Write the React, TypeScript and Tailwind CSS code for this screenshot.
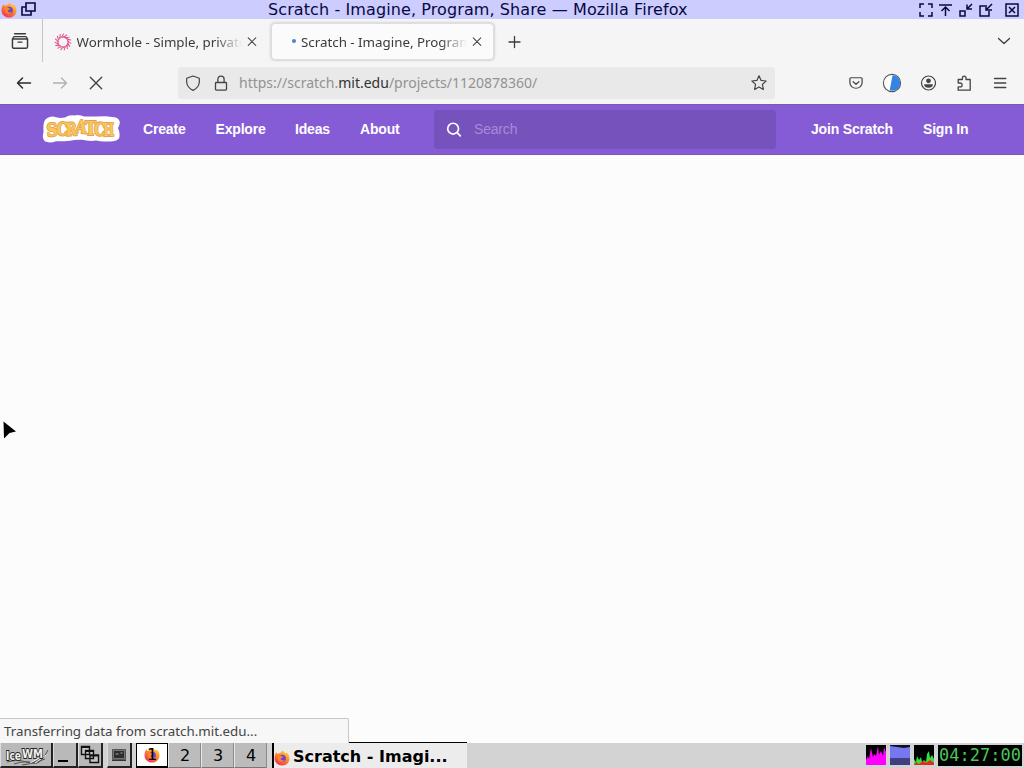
import type { ReactNode } from "react";

interface IconProps {
  /** Square size in pixels. */
  size?: number;
  className?: string;
  strokeWidth?: number;
  children: ReactNode;
}

/** Shared 16-unit canvas for the browser's line icons. */
function Icon({ size = 16, className = "", strokeWidth = 1.2, children }: IconProps) {
  return (
    <svg
      width={size}
      height={size}
      viewBox="0 0 16 16"
      fill="none"
      stroke="currentColor"
      strokeWidth={strokeWidth}
      strokeLinecap="round"
      strokeLinejoin="round"
      className={`shrink-0 ${className}`}
    >
      {children}
    </svg>
  );
}

function FirefoxLogo({ size = 16, className = "" }: { size?: number; className?: string }) {
  return (
    <svg width={size} height={size} viewBox="0 0 16 16" className={`shrink-0 ${className}`}>
      <defs>
        <linearGradient id="fox" x1="0.85" y1="0" x2="0.2" y2="1">
          <stop offset="0" stopColor="#ffdc3e" />
          <stop offset="0.45" stopColor="#ff8a2a" />
          <stop offset="1" stopColor="#ee2b58" />
        </linearGradient>
      </defs>
      <path
        d="M2.2 2.2 3.6 4 C4.5 3.2 5.5 3 6.4 3 C7 1.8 8 1 9.2.5 C9.4 2 10.8 2.7 12 3.6 L12.6 2.6 C14.8 4.4 15.7 6.6 15.5 9 C15.2 13 12 15.6 8 15.6 C3.8 15.6.5 12.5.5 8.3 C.5 6 1.2 4 2.2 2.2Z"
        fill="url(#fox)"
      />
      <circle cx="8.2" cy="8.4" r="3.7" fill="#7543c5" />
      <path d="M3.6 5.6C5 4.8 6.8 5.3 7.8 6.3L9.4 6.8C8.8 8 7.3 7.8 6.6 8.8C6.8 10.5 9.2 11 11 9.7C10 12.6 5.2 12.8 4 9.5Z" fill="#ff852b" />
    </svg>
  );
}

function WormholeLogo() {
  return (
    <svg width="18" height="18" viewBox="-9 -9 18 18" fill="none" stroke="#e5528b" strokeWidth="1.1" className="mb-px shrink-0">
      {Array.from({ length: 15 }, (_, i) => (
        <path key={i} d="M-1.5 -4.6C0.8 -5 2.6 -5.6 4 -7.4" transform={`rotate(${i * 24})`} />
      ))}
    </svg>
  );
}

const logoLetters = [
  { char: "S", x: 4.5, y: 22.2, turn: -4 },
  { char: "C", x: 14.5, y: 21.4, turn: 3 },
  { char: "R", x: 23.5, y: 21.6, turn: -2 },
  { char: "A", x: 33.5, y: 19, turn: 5 },
  { char: "T", x: 43, y: 21, turn: 0 },
  { char: "C", x: 52, y: 21.5, turn: 3 },
  { char: "H", x: 61, y: 22, turn: -2 },
];

function ScratchLogo() {
  const letters = logoLetters.map(({ char, x, y, turn }, i) => (
    <text key={i} x={x} y={y} transform={`rotate(${turn} ${x + 5} ${y - 6})`} textLength="11" lengthAdjust="spacingAndGlyphs">
      {char}
    </text>
  ));
  return (
    <svg width="78" height="30" viewBox="0 0 78 30" className="mb-px shrink-0 font-['DejaVu_Serif',serif] text-[18px] font-bold">
      <path
        d="M5 4.2Q9 1.5 14 3.2Q18 4.6 23 3.6Q27 .8 32 1.4Q38 .2 42 2.6Q49 2.2 56 2.6Q64 1.6 70 3Q76 3 77.5 7Q78.5 10 76 14Q78.5 19 77 24.5Q74 28 66 27.4Q60 28 54 26.6Q47 27.5 40 25.8Q34 25.4 28 26.8Q20 27.6 14 27.2Q8 29.4 3 27.6Q-.5 24 1.6 18Q1 12 2 8.5Q2.4 5.4 5 4.2Z"
        fill="white"
      />
      <g fill="#e3a04b" stroke="#e3a04b" strokeWidth="1.8" strokeLinejoin="round">{letters}</g>
      <g fill="#fac75c">{letters}</g>
    </svg>
  );
}

function TitleBar() {
  return (
    <header className="flex h-[19px] items-center bg-[#ccccff] text-[#080842]">
      <FirefoxLogo className="ml-px" />
      <svg width="15" height="15" viewBox="0 0 15 15" fill="none" stroke="currentColor" strokeWidth="1.6" className="ml-1 shrink-0">
        <path d="M5 1h9v8H5zM5 5H1v8h9V9" />
      </svg>
      <h1 className="ml-[232px] w-[422px] whitespace-nowrap font-['DejaVu_Sans',sans-serif] text-[16px] leading-[19px] tracking-[0.1px]">
        Scratch - Imagine, Program, Share — Mozilla Firefox
      </h1>
      <svg width="104" height="16" viewBox="0 0 104 16" fill="none" stroke="currentColor" strokeWidth="1.5" className="ml-auto mr-[2px] mt-px">
        <path d="M2 6V2h4M10 2h4v4M14 10v4h-4M6 14H2v-4" />
        <path d="M21 3h13M27.5 14V5M23.5 9l4-4 4 4" />
        <path d="M42 9h5v5h-5zM54 2l-5 5M49 2.5V7h5" />
        <path d="M67 4h-5v10h9V9M74 2l-6 6M68 3v5h6" />
        <path d="M88 2h12v12H88zM91 5l6 6M97 5l-6 6" />
      </svg>
    </header>
  );
}

const CloseIcon = () => (
  <Icon size={12} className="text-[#444]" strokeWidth={1.4}>
    <path d="M3 2.5l10 10M13 2.5l-10 10" />
  </Icon>
);

function TabBar() {
  return (
    <div className="flex h-[43px] items-start bg-[#f5f5f5] font-['Noto_Sans',sans-serif] text-[13.33px] text-[#3b3b3b]">
      <div className="flex h-[43px] w-[43px] items-center border-r border-[#c5c5c5] pl-[11px]">
        <Icon size={18} strokeWidth={1.3}>
          <path d="M3.2 1.5h9.6M1.4 6.2l.8-1.5q.3-.6 1-.6h9.6q.7 0 1 .6l.8 1.5M1.3 6.3h13.4v6.7q0 1.5-1.5 1.5H2.8q-1.5 0-1.5-1.5zM6.3 9h3.4" />
        </Icon>
      </div>
      <div className="flex h-[46px] w-[221px] items-center pl-[11px]">
        <WormholeLogo />
        <span className="ml-[4.5px] w-[165.5px] overflow-hidden whitespace-nowrap pt-px [mask-image:linear-gradient(to_right,black_84%,transparent)]">
          Wormhole - Simple, private
        </span>
        <span className="ml-[4px]"><CloseIcon /></span>
      </div>
      <div className="ml-[7px] mt-[4px] flex h-[37px] w-[223px] items-center rounded-[4px] border border-[#dedede] bg-[#fbfbfb] pt-px shadow-[0_0_3px_rgba(0,0,0,0.25)]">
        <span className="ml-[20px] mb-[2px] size-1 rounded-full bg-[#4c82c8]" />
        <span className="ml-[5px] w-[166px] overflow-hidden whitespace-nowrap pt-px [mask-image:linear-gradient(to_right,black_84%,transparent)]">
          Scratch - Imagine, Program
        </span>
        <span className="mb-px ml-[4px]"><CloseIcon /></span>
      </div>
      <Icon size={16} className="ml-[12px] mt-[15px]" strokeWidth={1.3}>
        <path d="M8.5 2.5v11M3 8h11" />
      </Icon>
      <Icon size={16} className="ml-auto mr-[12px] mt-[14px]" strokeWidth={1.3}>
        <path d="m2.5 5.5 5.5 5 5.5-5" />
      </Icon>
    </div>
  );
}

function Toolbar() {
  return (
    <div className="flex h-[42px] items-center bg-[#f5f5f5] pl-[16px] text-[#444]">
      <Icon className="text-[#2b2b2b]" strokeWidth={1.5}><path d="M14.5 8H1.5M6.5 3 1.5 8l5 5" /></Icon>
      <Icon className="ml-[20px] text-[#b0b0b0]" strokeWidth={1.3}><path d="M1.5 8h13M9.5 3l5 5-5 5" /></Icon>
      <Icon className="ml-[20px]" strokeWidth={1.4}><path d="M2.3 2.3l11.4 11.4M13.7 2.3 2.3 13.7" /></Icon>
      <div className="ml-[74px] flex h-[32px] w-[597px] items-center rounded-[3px] bg-[#e9e9e9] pl-[7px]">
        <Icon><path d="M8 1 14.3 3.2V7.5Q13.7 12.5 8 15.4Q2.3 12.5 1.7 7.5V3.2Z" /></Icon>
        <Icon className="ml-[12px]" strokeWidth={1.3}><path d="M3.3 7.5h9.4q.8 0 .8.8v6q0 .8-.8.8H3.3q-.8 0-.8-.8v-6q0-.8.8-.8zM4.9 7.3V4.3q0-3.1 3.1-3.1t3.1 3.1v3" /></Icon>
        <p className="mb-[2px] ml-[10px] w-[299px] whitespace-nowrap font-['Noto_Sans',sans-serif] text-[14px] text-[#929292]">
          https://scratch.<span className="text-[#333]">mit.edu</span>/projects/1120878360/
        </p>
        <Icon className="ml-auto mr-[8px]" strokeWidth={1.2}>
          <path d="m8 .8 2.1 4.6 5 .6-3.7 3.4 1 5L8 11.9l-4.4 2.5 1-5L.9 6l5-.6z" />
        </Icon>
      </div>
      <Icon size={14} className="ml-[74px]" strokeWidth={1.4}>
        <path d="M2.2 2h11.6q1.2 0 1.2 1.2v4.3a7 6.5 0 0 1-14 0V3.2Q1 2 2.2 2zM4.7 6.5 8 9.5l3.3-3" />
      </Icon>
      <svg width="20" height="20" viewBox="0 0 20 20" className="ml-[19px] shrink-0">
        <circle cx="10" cy="10" r="8.6" fill="white" stroke="#555" strokeWidth="1.1" />
        <path d="M10.5 2.2A7.8 7.8 0 0 1 10.5 17.8L7.7 17.2Z" fill="#3584e4" />
      </svg>
      <Icon className="ml-[18px]" strokeWidth={1.2}>
        <circle cx="8.5" cy="8" r="7" />
        <circle cx="8.5" cy="5.8" r="2.4" fill="currentColor" stroke="none" />
        <path d="M4 9.3h9Q12.5 12.8 8.5 12.8T4 9.3Z" fill="currentColor" stroke="none" />
      </Icon>
      <Icon className="ml-[20px]" strokeWidth={1.3}>
        <path d="M2.2 4.5h4.2V3a1.8 1.8 0 0 1 3.6 0v1.5h4.2v10.7h-12v-3.4h2a1.9 1.9 0 0 0 0-3.8h-2Z" />
      </Icon>
      <Icon className="ml-[20px]" strokeWidth={1.3}><path d="M2.5 3.5h11.3M2.5 8h11.3M2.5 12.5h11.3" /></Icon>
    </div>
  );
}

function ScratchNav() {
  return (
    <nav className="flex h-[51px] items-center border-y border-[#795dab] bg-[#855cd6] pl-[42px] font-['Liberation_Sans',sans-serif] text-[14px] font-bold tracking-[-0.18px] text-white">
      <ScratchLogo />
      <a className="ml-[23px] w-[42px]">Create</a>
      <a className="ml-[30.5px] w-[50px]">Explore</a>
      <a className="ml-[29.5px] w-[35px]">Ideas</a>
      <a className="ml-[30px] w-[40px]">About</a>
      <div className="ml-[34px] flex h-[39px] w-[342px] items-center rounded-[4px] bg-[#7652bc] pl-[11px] font-normal text-[#a58bd8]">
        <Icon size={18} className="text-white" strokeWidth={1.5}>
          <circle cx="7.2" cy="6.8" r="4.8" />
          <path d="m10.8 10.4 2.8 2.8" />
        </Icon>
        <span className="ml-[11px]">Search</span>
      </div>
      <a className="ml-[35px] w-[82px] whitespace-nowrap">Join Scratch</a>
      <a className="ml-[30px] whitespace-nowrap">Sign In</a>
    </nav>
  );
}

/** Square grey button with the window manager's bevel. */
function TaskButton({ className, children }: { className: string; children: ReactNode }) {
  return (
    <div className={`flex h-[25px] shrink-0 items-center justify-center border-r-2 border-b-2 border-l border-r-[#222] border-b-[#222] border-l-[#ddd] bg-[#b9b9b9] ${className}`}>
      {children}
    </div>
  );
}

function Taskbar() {
  return (
    <footer className="flex h-[25px] items-start bg-[#d3d3d3] font-['DejaVu_Sans',sans-serif] text-black">
      <TaskButton className="w-[53px]">
        <svg width="48" height="22" viewBox="0 0 48 22" className="shrink-0 font-['DejaVu_Sans',sans-serif] font-bold">
          <g fill="none" stroke="#555">
            <path d="M5 18Q16 15 24 18T43 11M12 20Q24 16 31 19T46 6M20 21Q32 20 43 15" />
            <path d="m28 19 9-5M33 19 44 11" stroke="#eee" />
          </g>
          <g fill="#f2f2f2" stroke="#222" strokeWidth="1.8" paintOrder="stroke">
            <text x="4" y="15.5" fontSize="12" textLength="15" lengthAdjust="spacingAndGlyphs">Ice</text>
            <text x="20" y="13.5" fontSize="13" textLength="21" lengthAdjust="spacingAndGlyphs">WM</text>
          </g>
        </svg>
      </TaskButton>
      <TaskButton className="w-[25px]"><span className="mt-[13px] mr-[5px] h-[2px] w-[10px] bg-black" /></TaskButton>
      <TaskButton className="w-[25px]">
        <svg width="20" height="19" viewBox="0 0 20 19" fill="#c6c6c6" stroke="#111" strokeWidth="1.4" className="shrink-0">
          <path d="M1.5 1.5h8v8h-8zM5.5 5.5h8v8h-8zM10 10h8.5v7.5H10z" />
          <path d="M1.5 2.3h8M5.5 6.3h8M10 10.8h8.5" />
        </svg>
      </TaskButton>
      <TaskButton className="ml-[4px] w-[25px]">
        <svg width="16" height="15" viewBox="0 0 16 15" className="shrink-0">
          <path d="M1.5 2.5h13v10h-13z" fill="#777" stroke="#555" />
          <path d="M3 4h10v7H3z" fill="#2d2d2d" />
          <path d="M4.5 7h3M9.5 6h2" stroke="#aaa" />
          <path d="M1 13.5h14" stroke="#333" />
        </svg>
      </TaskButton>
      <div className="relative ml-[4px] flex h-[25px] w-[32px] items-center justify-center border border-b-2 border-black bg-white">
        <FirefoxLogo />
        <span className="absolute text-[16px]">1</span>
      </div>
      {["2", "3", "4"].map((workspace) => (
        <div key={workspace} className="flex h-[25px] w-[33px] items-center justify-center border-r border-b border-l border-r-[#8b8b8b] border-b-[#777] border-l-[#e8e8e8] bg-[#bcbcbc] pl-px pt-px text-[16px]">
          {workspace}
        </div>
      ))}
      <div className="-mt-px ml-[5px] flex h-[26px] w-[195px] items-center border-t border-l-2 border-black bg-[#ececec] pt-[3px]">
        <FirefoxLogo className="mt-px" />
        <span className="ml-[3px] whitespace-nowrap text-[16px] font-bold">Scratch - Imagi...</span>
      </div>
      <div className="ml-auto mr-[2px] mt-[2px] flex h-[21px] gap-[4px]">
        <svg width="20" height="20" viewBox="0 0 20 20" className="bg-black">
          <path d="M0 20V15L2 11 3 14 5 3 7 12 8 9 10 11 12 1 13 10 15 6 17 11 18 2 20 7V20Z" fill="#ff00ff" />
        </svg>
        <svg width="20" height="20" viewBox="0 0 20 20" className="bg-[#7777ef]">
          <path d="M0 0h20v2L14 3 0 1Z" fill="#101020" />
          <path d="M0 13h20v7H0z" fill="#404080" />
        </svg>
        <svg width="20" height="20" viewBox="0 0 20 20" className="bg-black">
          <path d="M0 20V14L2 17 3 11 5 15 7 12 8 17 10 15 12 17 13 9 15 6 16 13 18 10 20 14V20Z" fill="#35df42" />
          <path d="M0 20 2 17 5 19 9 16 12 18 16 15 20 18V20Z" fill="#e82918" />
        </svg>
        <time className="h-[21px] w-[84px] bg-black text-center font-['DejaVu_Sans_Mono',monospace] text-[17px] leading-[20px] text-[#48c65a]">04:27:00</time>
      </div>
    </footer>
  );
}

export default function App() {
  return (
    <div className="relative flex h-[768px] w-[1024px] flex-col overflow-hidden bg-[#fcfcfc]">
      <TitleBar />
      <TabBar />
      <Toolbar />
      <ScratchNav />
      <main className="flex-1" />
      <Taskbar />

      {/* Loading status sits over the page's bottom edge */}
      <div className="absolute bottom-[25px] left-0 h-[25px] w-[349px] rounded-tr-[2px] border-t border-r border-[#c7c7c7] bg-[#f7f7f7] pl-[4px] font-['Noto_Sans',sans-serif] text-[13.33px] leading-[24px] text-[#444]">
        Transferring data from scratch.mit.edu...
      </div>
      <svg width="16" height="20" viewBox="0 0 16 20" className="absolute top-[420px] left-[2px]">
        <path d="M1.5 1.5 14 11.5 7.5 13 2 18.5Z" fill="black" />
      </svg>
    </div>
  );
}
